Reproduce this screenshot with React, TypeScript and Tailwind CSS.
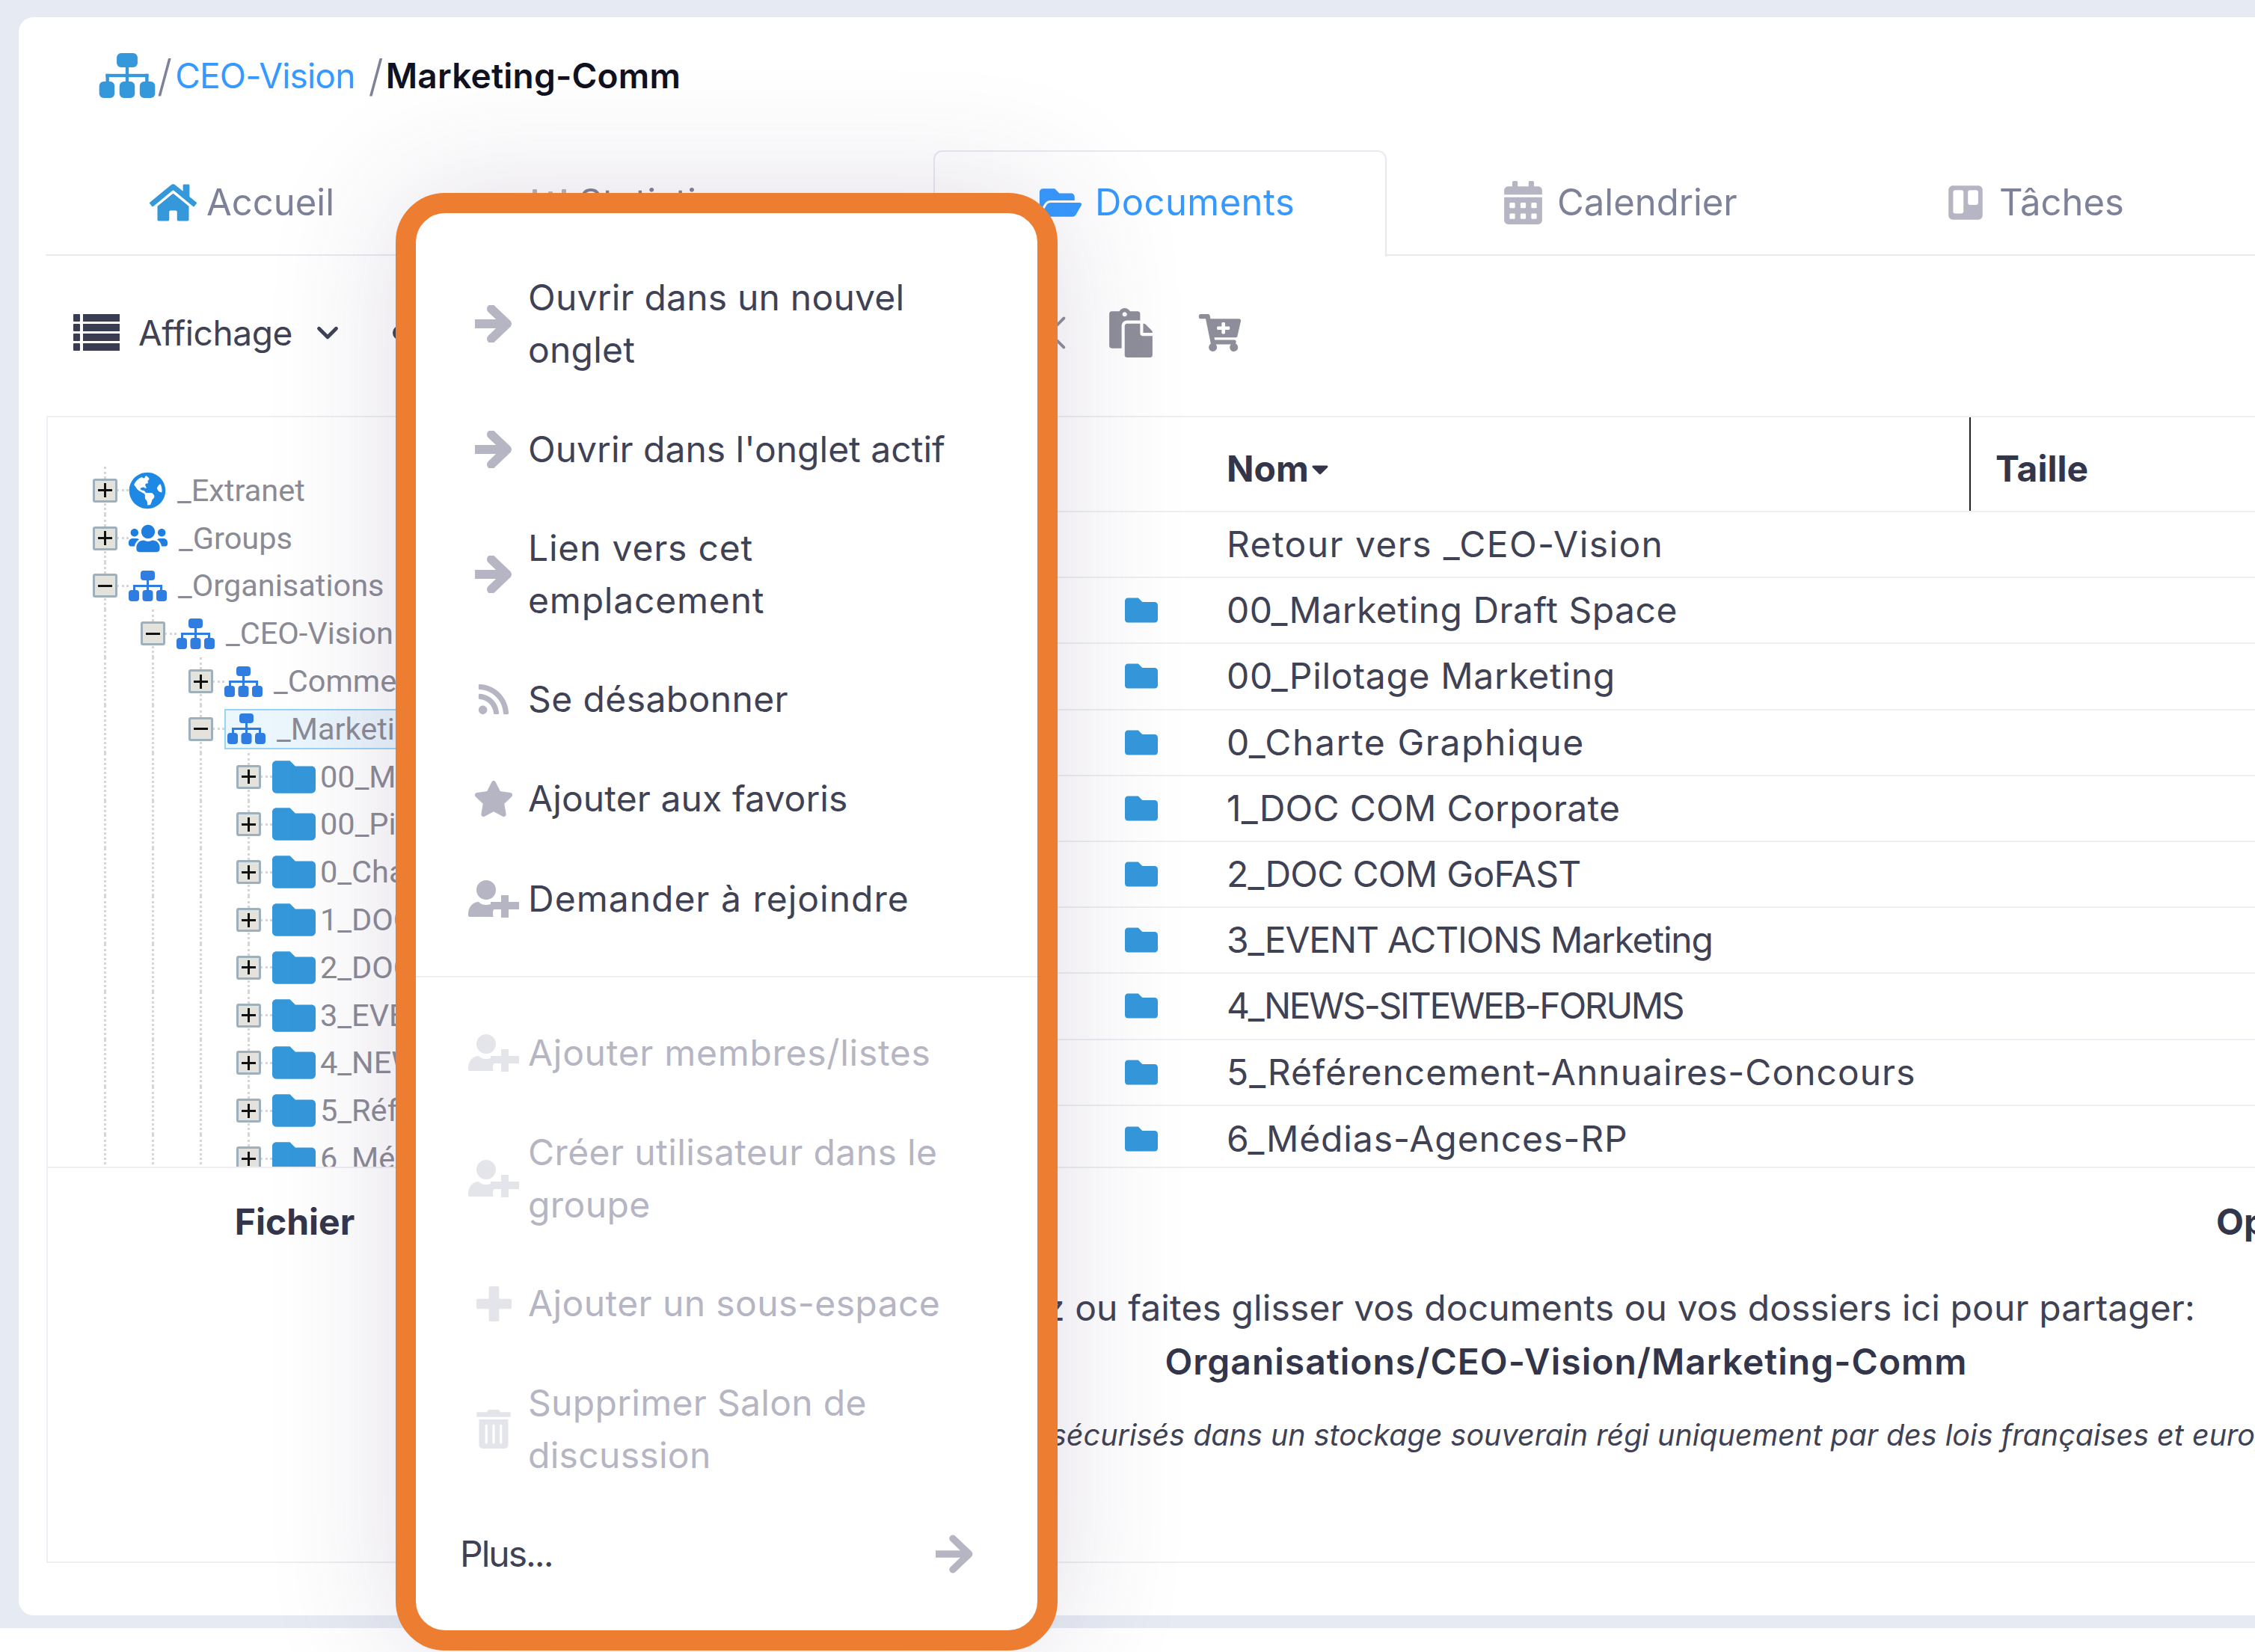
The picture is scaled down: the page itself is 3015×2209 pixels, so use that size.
import React from "react";
import {
  FaHome, FaChartBar, FaFolderOpen, FaCalendarAlt, FaTrello, FaPaste, FaCartPlus,
  FaRss, FaStar, FaTrashAlt, FaFolder, FaGlobeAmericas, FaUsers, FaCaretDown,
} from "react-icons/fa";
import { ChevronDown, Scissors } from "lucide-react";

function OrgGlyph({ className }: { className?: string }) {
  return (
    <svg viewBox="0 0 51 41" className={className} fill="currentColor">
      <rect x="16" y="0" width="19" height="13" rx="4" />
      <rect x="24" y="13" width="3" height="14" />
      <rect x="6" y="19" width="39" height="3" />
      <rect x="6" y="19" width="3" height="8" />
      <rect x="42" y="19" width="3" height="8" />
      <rect x="0" y="26" width="14" height="15" rx="4" />
      <rect x="18.5" y="26" width="14" height="15" rx="4" />
      <rect x="37" y="26" width="14" height="15" rx="4" />
    </svg>
  );
}

function UserPlus({ className }: { className?: string }) {
  return (
    <svg viewBox="0 0 68 50" className={className} fill="currentColor">
      <circle cx="24" cy="13" r="13" />
      <path d="M2 49c-2 0-2-2-2-4 0-9 6-16 14-16 3 3 6 4 10 4s7-1 10-4c4 0 7 1 9 4-6 1-10 5-10 11 0 2 0 4 1 5z" />
      <path d="M44 20h10v9h14v10H54v11H44V39H30V29h14z" />
    </svg>
  );
}

function ArrowGlyph({ className, weight }: { className?: string; weight: number }) {
  return (
    <svg viewBox="0 0 50 50" className={className} fill="none" stroke="currentColor" strokeWidth={weight}>
      <path d="M0 25H42" />
      <path d="M22 5L43 25L22 45" strokeLinecap="round" strokeLinejoin="round" />
    </svg>
  );
}

function PlusGlyph() {
  return (
    <svg viewBox="0 0 48 48" className="h-[47px] w-[47px]" fill="currentColor">
      <rect x="17" y="0" width="14" height="48" rx="2" />
      <rect x="0" y="17" width="48" height="14" rx="2" />
    </svg>
  );
}

function ListGlyph() {
  return (
    <svg viewBox="0 0 62 50" className="h-[50px] w-[62px]" fill="#3a3d52">
      {[0, 13, 26, 39].map((y) => (
        <g key={y}>
          <rect x="0" y={y} width="9" height="10" rx="1" />
          <rect x="13" y={y} width="49" height="10" />
        </g>
      ))}
    </svg>
  );
}

function Tab({ icon, label, pad, width, gap, active }: { icon: React.ReactNode; label: string; pad: string; width: string; gap: string; active?: boolean }) {
  return (
    <div
      className={`flex items-center ${gap} ${pad} ${width} ${
        active
          ? "-mb-[2px] h-[142px] rounded-t-[12px] border-[2px] border-b-0 border-[#e9e9f2] bg-white pb-[4px] tracking-[0.4px] text-[#3699ff]"
          : "h-[140px] text-[#7e8299]"
      }`}
    >
      {icon}
      <span>{label}</span>
    </div>
  );
}

type MenuEntry = { lines: string[]; icon: "arrow" | "rss" | "star" | "user" | "plus" | "trash"; off?: boolean; track: string; pad: string };

const MENU_TOP: MenuEntry[] = [
  { lines: ["Ouvrir dans un nouvel", "onglet"], icon: "arrow", track: "tracking-[0.2px]", pad: "py-[32px]" },
  { lines: ["Ouvrir dans l'onglet actif"], icon: "arrow", track: "tracking-[0px]", pad: "py-[31px]" },
  { lines: ["Lien vers cet", "emplacement"], icon: "arrow", track: "tracking-[0.8px]", pad: "py-[31px]" },
  { lines: ["Se désabonner"], icon: "rss", track: "tracking-[0.4px]", pad: "py-[31px]" },
  { lines: ["Ajouter aux favoris"], icon: "star", track: "tracking-[0.1px]", pad: "py-[32px]" },
  { lines: ["Demander à rejoindre"], icon: "user", track: "tracking-[1px]", pad: "py-[32px]" },
];
const MENU_BOTTOM: MenuEntry[] = [
  { lines: ["Ajouter membres/listes"], icon: "user", off: true, track: "tracking-[0.7px]", pad: "py-[32px]" },
  { lines: ["Créer utilisateur dans le", "groupe"], icon: "user", off: true, track: "tracking-[0.4px]", pad: "py-[31px]" },
  { lines: ["Ajouter un sous-espace"], icon: "plus", off: true, track: "tracking-[0.4px]", pad: "py-[31px]" },
  { lines: ["Supprimer Salon de", "discussion"], icon: "trash", off: true, track: "tracking-[0.3px]", pad: "py-[32px]" },
];

function MenuIcon({ name }: { name: MenuEntry["icon"] }) {
  switch (name) {
    case "arrow": return <ArrowGlyph className="h-[50px] w-[50px]" weight={12} />;
    case "rss": return <FaRss className="h-[46px] w-[46px]" />;
    case "star": return <FaStar className="h-[50px] w-[54px]" />;
    case "user": return <UserPlus className="h-[50px] w-[68px]" />;
    case "plus": return <PlusGlyph />;
    default: return <FaTrashAlt className="h-[52px] w-[46px]" />;
  }
}

function MenuItem({ item }: { item: MenuEntry }) {
  return (
    <div className={`flex items-center ${item.pad}`}>
      <div className={`flex w-[150px] shrink-0 justify-start pl-[58px] ${item.off ? "text-[#e4e4eb]" : "text-[#b5b5c3]"}`}>
        <div className="flex w-[94px] justify-center"><MenuIcon name={item.icon} /></div>
      </div>
      <div className={`${item.track} ${item.off ? "text-[#b5b5c3]" : "text-[#3f4254]"}`}>
        {item.lines.map((l) => <div key={l}>{l}</div>)}
      </div>
    </div>
  );
}

type TreeRow = { level: number; open?: boolean; kind: "globe" | "users" | "org" | "folder"; name: string; selected?: boolean };

const TREE: TreeRow[] = [
  { level: 0, kind: "globe", name: "_Extranet" },
  { level: 0, kind: "users", name: "_Groups" },
  { level: 0, open: true, kind: "org", name: "_Organisations" },
  { level: 1, open: true, kind: "org", name: "_CEO-Vision" },
  { level: 2, kind: "org", name: "_Commercial" },
  { level: 2, open: true, kind: "org", name: "_Marketing-Comm", selected: true },
  { level: 3, kind: "folder", name: "00_Marketing Draft Space" },
  { level: 3, kind: "folder", name: "00_Pilotage Marketing" },
  { level: 3, kind: "folder", name: "0_Charte Graphique" },
  { level: 3, kind: "folder", name: "1_DOC COM Corporate" },
  { level: 3, kind: "folder", name: "2_DOC COM GoFAST" },
  { level: 3, kind: "folder", name: "3_EVENT ACTIONS Marketing" },
  { level: 3, kind: "folder", name: "4_NEWS-SITEWEB-FORUMS" },
  { level: 3, kind: "folder", name: "5_Référencement-Annuaires-Concours" },
  { level: 3, kind: "folder", name: "6_Médias-Agences-RP" },
];

function Guide() {
  return (
    <div className="flex h-full w-[64px] shrink-0 justify-center">
      <div className="h-full border-l-[3px] border-dotted border-[#d6d6d6]" />
    </div>
  );
}

function Expander({ open }: { open?: boolean }) {
  return (
    <div className="relative flex h-full w-[64px] shrink-0 items-center justify-center">
      <div className="absolute top-0 h-full border-l-[3px] border-dotted border-[#d6d6d6]" />
      <div className="absolute left-[48px] w-[16px] border-t-[3px] border-dotted border-[#d6d6d6]" />
      <div className="relative flex h-[32px] w-[33px] items-center justify-center rounded-[3px] border-[3px] border-[#9fb0bd] bg-[#e4e2dc]">
        <div className="absolute h-[3px] w-[19px] bg-[#111]" />
        {!open && <div className="absolute h-[19px] w-[3px] bg-[#111]" />}
      </div>
    </div>
  );
}

function TreeIcon({ kind }: { kind: TreeRow["kind"] }) {
  if (kind === "globe") return <FaGlobeAmericas className="h-[50px] w-[50px] text-[#1e88e5]" />;
  if (kind === "users") return <FaUsers className="h-[48px] w-[52px] text-[#1e7fe0]" />;
  if (kind === "org") return <OrgGlyph className="h-[41px] w-[51px] text-[#2f7de1]" />;
  return <FaFolder className="h-[58px] w-[58px] text-[#3498db]" />;
}

const ROWS = [
  { name: "00_Marketing Draft Space", track: "tracking-[0.5px]" },
  { name: "00_Pilotage Marketing", track: "tracking-[0.66px]" },
  { name: "0_Charte Graphique", track: "tracking-[1.6px]" },
  { name: "1_DOC COM Corporate", track: "tracking-[0.3px]" },
  { name: "2_DOC COM GoFAST", track: "tracking-[-0.7px]" },
  { name: "3_EVENT ACTIONS Marketing", track: "tracking-[-1.2px]" },
  { name: "4_NEWS-SITEWEB-FORUMS", track: "tracking-[-2.3px]" },
  { name: "5_Référencement-Annuaires-Concours", track: "tracking-[1px]" },
  { name: "6_Médias-Agences-RP", track: "tracking-[0.9px]" },
];

export default function App() {
  return (
    <div className="h-[2209px] w-[3015px] overflow-hidden bg-white font-[family-name:Inter,sans-serif] text-[48px] leading-[70px] text-[#3f4254]">
      <div className="h-[2177px] bg-[#e6ebf3] pl-[25px] pt-[23px]">
        <div className="relative h-[2137px] w-[3200px] rounded-l-[20px] bg-white">
          {/* breadcrumb */}
          <div className="h-[178px] pl-[107px] pt-[48px]">
            <div className="flex h-[60px] items-center text-[46px]">
              <OrgGlyph className="h-[60px] w-[76px] text-[#3498db]" />
              <span className="ml-[2px] text-[58px] font-light text-[#7e8299]">/</span>
              <span className="ml-[4px] tracking-[-0.8px] text-[#3699ff]">CEO-Vision</span>
              <span className="ml-[18px] text-[58px] font-light text-[#7e8299]">/</span>
              <span className="ml-[3px] font-semibold tracking-[0.2px] text-[#101221]">Marketing-Comm</span>
            </div>
          </div>
          {/* tabs */}
          <div className="ml-[36px] flex h-[141px] items-stretch border-b-[2px] border-[#e9e9f2] text-[49px]">
            <Tab width="w-[507px]" pad="pl-[137px]" gap="gap-[11px]" label="Accueil" icon={<FaHome className="h-[56px] w-[67px] text-[#3498db]" />} />
            <Tab width="w-[680px]" pad="pl-[143px]" gap="gap-[13px]" label="Statistiques" icon={<FaChartBar className="h-[48px] w-[50px] text-[#b5b5c3]" />} />
            <Tab active width="w-[606px]" pad="pl-[135px]" gap="gap-[13px]" label="Documents" icon={<FaFolderOpen className="h-[50px] w-[66px] text-[#3699ff]" />} />
            <Tab width="w-[616px]" pad="pl-[157px]" gap="gap-[20px]" label="Calendrier" icon={<FaCalendarAlt className="h-[58px] w-[51px] text-[#b5b5c3]" />} />
            <Tab width="w-[500px]" pad="pl-[132px]" gap="gap-[19px]" label="Tâches" icon={<FaTrello className="h-[52px] w-[52px] text-[#b5b5c3]" />} />
          </div>
          {/* toolbar */}
          <div className="ml-[36px] flex h-[214px] items-center pb-[8px] pl-[37px] text-[46px]">
            <ListGlyph />
            <span className="ml-[25px] tracking-[-0.4px] text-[#3f4254]">Affichage</span>
            <ChevronDown className="ml-[24px] h-[46px] w-[46px] text-[#3f4254]" strokeWidth={2.5} />
            <div className="ml-[64px] h-[20px] w-[20px] rounded-full border-[4px] border-[#3f4254]" />
            <div className="ml-[829px] flex items-center">
              <Scissors className="h-[58px] w-[58px] text-[#8e8e9a]" strokeWidth={1.6} />
              <FaPaste className="ml-[50px] h-[66px] w-[60px] text-[#8e8e9a]" />
              <FaCartPlus className="ml-[60px] h-[50px] w-[58px] text-[#8e8e9a]" />
            </div>
          </div>
          {/* main panel */}
          <div className="ml-[37px] h-[1534px] border-y-[2px] border-l-[2px] border-[#eeeef4]">
            <div className="flex h-[1004px] border-b-[2px] border-[#eeeef4]">
              {/* tree */}
              <div className="h-full w-[1336px] shrink-0 overflow-hidden pl-[44px] pt-[66px] font-[family-name:Roboto,sans-serif] text-[41.5px] text-[#8b8b96]">
                {TREE.map((r) => (
                  <div key={r.name} className="flex h-[63.8px] items-center">
                    {Array.from({ length: r.level }).map((_, i) => <Guide key={i} />)}
                    <Expander open={r.open} />
                    <div className={`flex h-[54px] items-center ${r.kind === "folder" ? "gap-[6px]" : "gap-[15px]"} ${r.selected ? "border-[2px] border-[#9bd3f5] bg-[#ebf6fd] pl-[2px] pr-[40px]" : ""}`}>
                      <TreeIcon kind={r.kind} />
                      <span className="whitespace-nowrap">{r.name}</span>
                    </div>
                  </div>
                ))}
              </div>
              {/* table */}
              <div className="flex-1">
                <div className="flex h-[127px] border-b-[2px] border-[#eeeef4] pt-[12px] font-bold text-[#33364a]">
                  <div className="flex w-[1233px] items-center pl-[240px]">
                    Nom<FaCaretDown className="h-[36px] w-[30px] text-[#33364a]" />
                  </div>
                  <div className="-mt-[12px] flex flex-1 items-center border-l-[2px] border-[#222] pl-[33px] pt-[12px]">Taille</div>
                </div>
                <div className="flex h-[88.2px] items-center border-b-[2px] border-[#eeeef4] pl-[240px] tracking-[1.4px]">Retour vers _CEO-Vision</div>
                {ROWS.map((r, i) => (
                  <div key={r.name} className={`flex h-[88.2px] items-center pl-[104px] ${i < ROWS.length - 1 ? "border-b-[2px] border-[#eeeef4]" : ""}`}>
                    <FaFolder className="h-[44px] w-[44px] shrink-0 text-[#3498db]" />
                    <span className={`ml-[92px] whitespace-nowrap ${r.track}`}>{r.name}</span>
                  </div>
                ))}
              </div>
            </div>
            {/* footer */}
            <div className="h-[526px] pt-[40px]">
              <div className="flex h-[64px] items-center font-bold text-[#33364a]">
                <div className="w-[660px] text-center">Fichier</div>
                <div className="ml-[2239px]">Opérations</div>
              </div>
              <div className="ml-[660px] mt-[47px] w-[2740px] whitespace-nowrap text-center">
                <div className="h-[72px] leading-[72px] tracking-[0.1px]">Cliquez ou faites glisser vos documents ou vos dossiers ici pour partager:</div>
                <div className="h-[72px] font-semibold leading-[72px] tracking-[1px] text-[#33364a]">Organisations/CEO-Vision/Marketing-Comm</div>
                <div className="mt-[32px] h-[60px] text-[39.5px] italic leading-[60px]">Vos documents sont sécurisés dans un stockage souverain régi uniquement par des lois françaises et européennes</div>
              </div>
            </div>
          </div>
          {/* menu */}
          <div className="absolute left-[504px] top-[235px] h-[1949px] w-[885px] rounded-[66px] border-[27px] border-[#ed7d31] bg-white pt-[46px] shadow-[0_0_170px_0_rgba(82,63,105,0.18)]">
            {MENU_TOP.map((m) => <MenuItem key={m.lines[0]} item={m} />)}
            <div className="mb-[34px] mt-[36px] border-t-[2px] border-[#eeeef4]" />
            {MENU_BOTTOM.map((m) => <MenuItem key={m.lines[0]} item={m} />)}
            <div className="flex h-[130px] items-center justify-between pl-[59px] pr-[84px] text-[#3f4254]">
              <span className="tracking-[-2px]">Plus...</span>
              <ArrowGlyph className="h-[52px] w-[52px] text-[#b5b5c3]" weight={9} />
            </div>
          </div>
        </div>
      </div>
    </div>
  );
}
